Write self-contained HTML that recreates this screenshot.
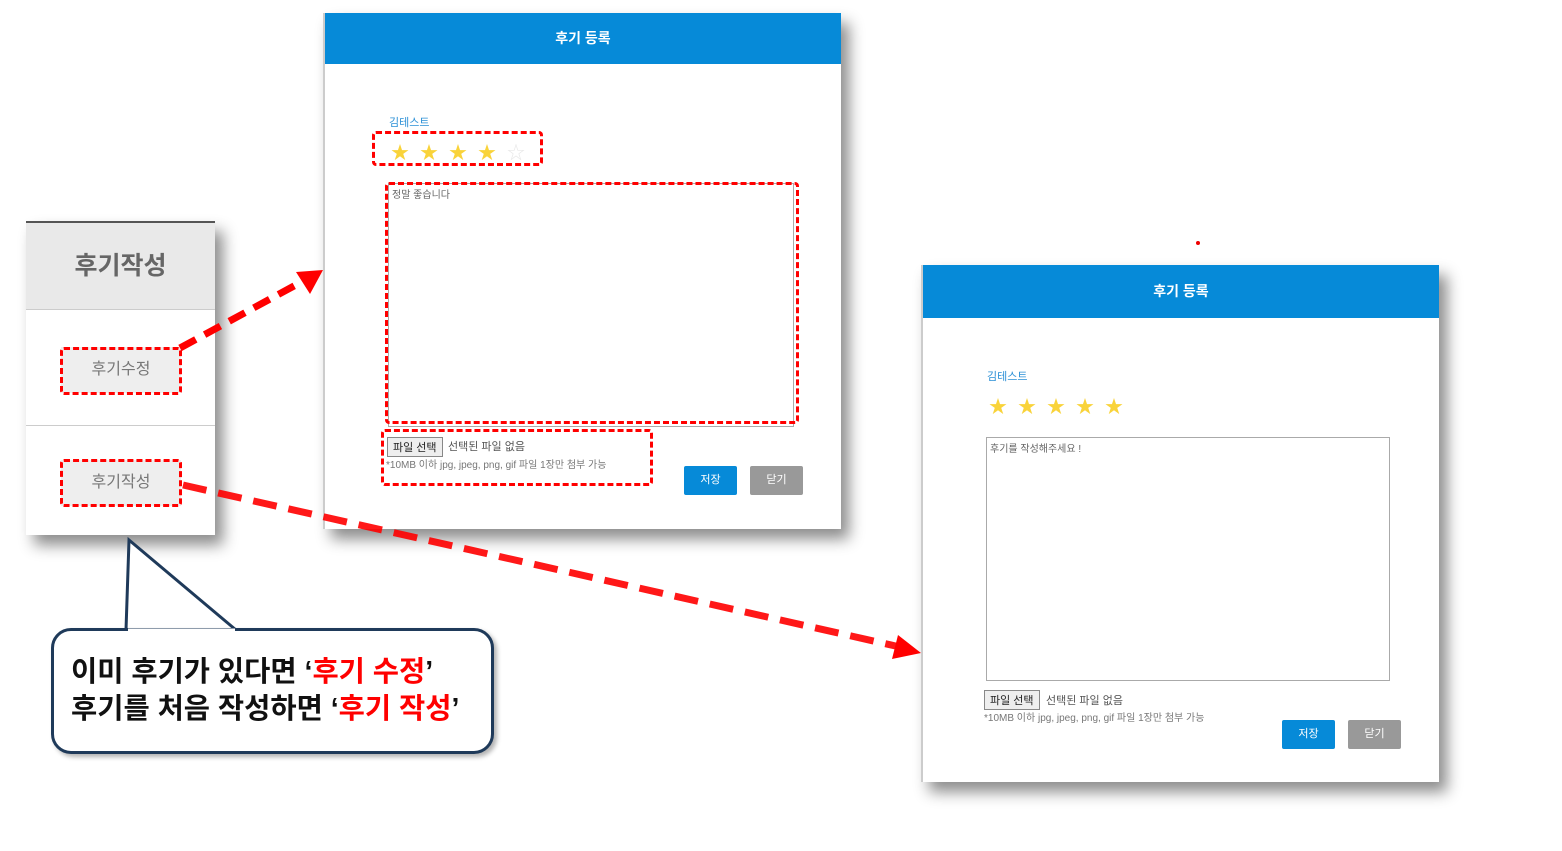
<!DOCTYPE html>
<html><head><meta charset="utf-8"><style>
*{margin:0;padding:0;box-sizing:border-box}
body{width:1562px;height:851px;background:#fff;position:relative;overflow:hidden;font-family:"Liberation Sans","Noto Sans CJK KR",sans-serif}
.abs{position:absolute}
.modal{position:absolute;background:#fff;box-shadow:8px 10px 14px rgba(0,0,0,.45);border-left:2px solid #ccc}
.hdr{background:#068ad8;color:#fff;font-weight:bold;font-size:14px;text-align:center}
.name{color:#2a8fd6;font-size:11px}
.star{color:#f9d33a;font-size:18px;position:absolute}
.ta{position:absolute;border:1px solid #aaa;font-size:10px;color:#666;padding:2px 3px}
.fbtn{position:absolute;border:1px solid #888;background:#eee;font-size:11px;padding:1px 5px;color:#222}
.ftxt{position:absolute;font-size:11px;color:#555}
.note{position:absolute;font-size:10px;color:#777}
.btn{position:absolute;width:53px;height:29px;color:#fff;font-size:11px;text-align:center;line-height:29px;border-radius:2px}
.dash{position:absolute;border:3px dashed #f00;border-radius:4px}
</style></head><body>

<div class="abs" style="left:26px;top:221px;width:189px;height:314px;background:#fff;box-shadow:8px 10px 14px rgba(0,0,0,.45);border-top:2px solid #555">
  <div style="height:87px;background:#e9e9e9;border-bottom:1px solid #ccc;text-align:center;line-height:87px;font-size:25px;font-weight:bold;color:#666">후기작성</div>
  <div style="position:absolute;top:202px;left:0;width:189px;border-top:1px solid #ccc"></div>
  <div class="abs" style="left:35px;top:124px;width:120px;height:46px;background:#eee;text-align:center;line-height:46px;font-size:16px;color:#777">후기수정</div>
  <div class="abs" style="left:35px;top:237px;width:120px;height:46px;background:#eee;text-align:center;line-height:46px;font-size:16px;color:#777">후기작성</div>
  <div class="dash" style="left:34px;top:124px;width:122px;height:48px"></div>
  <div class="dash" style="left:34px;top:236px;width:122px;height:48px"></div>
</div>

<div class="modal" style="left:323px;top:13px;width:518px;height:516px">
  <div class="hdr" style="height:51px;line-height:51px">후기 등록</div>
  <div class="name abs" style="left:64px;top:101px">김테스트</div>
  <span class="star" style="left:66px;top:126px">★</span>
  <span class="star" style="left:95px;top:126px">★</span>
  <span class="star" style="left:124px;top:126px">★</span>
  <span class="star" style="left:153px;top:126px">★</span>
  <span class="star" style="left:182px;top:126px;color:#e8e8e8">☆</span>
  <div class="dash" style="left:47px;top:118px;width:171px;height:35px"></div>
  <div class="ta" style="left:63px;top:170px;width:406px;height:244px">정말 좋습니다</div>
  <div class="dash" style="left:60px;top:169px;width:414px;height:242px"></div>
  <div class="fbtn" style="left:62px;top:424px">파일 선택</div>
  <div class="ftxt" style="left:123px;top:425px">선택된 파일 없음</div>
  <div class="note" style="left:61px;top:443px">*10MB 이하 jpg, jpeg, png, gif 파일 1장만 첨부 가능</div>
  <div class="dash" style="left:56px;top:416px;width:272px;height:57px"></div>
  <div class="btn" style="left:359px;top:453px;background:#068ad8">저장</div>
  <div class="btn" style="left:425px;top:453px;background:#999">닫기</div>
</div>

<div class="modal" style="left:921px;top:265px;width:518px;height:517px">
  <div class="hdr" style="height:53px;line-height:53px">후기 등록</div>
  <div class="name abs" style="left:64px;top:103px">김테스트</div>
  <span class="star" style="left:66px;top:128px">★</span>
  <span class="star" style="left:95px;top:128px">★</span>
  <span class="star" style="left:124px;top:128px">★</span>
  <span class="star" style="left:153px;top:128px">★</span>
  <span class="star" style="left:182px;top:128px">★</span>
  <div class="ta" style="left:63px;top:172px;width:404px;height:244px">후기를 작성해주세요 !</div>
  <div class="fbtn" style="left:61px;top:425px">파일 선택</div>
  <div class="ftxt" style="left:123px;top:427px">선택된 파일 없음</div>
  <div class="note" style="left:61px;top:444px">*10MB 이하 jpg, jpeg, png, gif 파일 1장만 첨부 가능</div>
  <div class="btn" style="left:359px;top:455px;background:#068ad8">저장</div>
  <div class="btn" style="left:425px;top:455px;background:#999">닫기</div>
</div>

<div class="abs" style="left:1196px;top:241px;width:4px;height:4px;border-radius:2px;background:#e00"></div>

<svg class="abs" style="left:0;top:0" width="1562" height="851">
  <line x1="180" y1="348" x2="305" y2="280" stroke="#f00" stroke-width="7" stroke-dasharray="18,10"/>
  <polygon points="323,270 296,272 310,294" fill="#f00"/>
  <line x1="183" y1="485" x2="900" y2="647" stroke="#f00" stroke-width="7" stroke-dasharray="24,12" opacity=".9"/>
  <polygon points="921,653 898,635 892,659" fill="#f00"/>
  <path d="M126,630 L129,540 L236,630" fill="#fff" stroke="#1f3a5a" stroke-width="3"/>
</svg>

<div class="abs" style="left:51px;top:628px;width:443px;height:126px;border:3px solid #1f3a5a;border-radius:20px;background:#fff;box-shadow:3px 3px 5px rgba(0,0,0,.3)"></div>
<svg class="abs" style="left:0;top:0" width="1562" height="851"><line x1="128" y1="630" x2="235" y2="630" stroke="#fff" stroke-width="3"/></svg>
<div class="abs" style="left:71px;top:654px;font-size:28.5px;font-weight:bold;color:#111;line-height:37px;white-space:nowrap">이미 후기가 있다면 ‘<span style="color:#f00">후기 수정</span>’<br>후기를 처음 작성하면 ‘<span style="color:#f00">후기 작성</span>’</div>
</body></html>
